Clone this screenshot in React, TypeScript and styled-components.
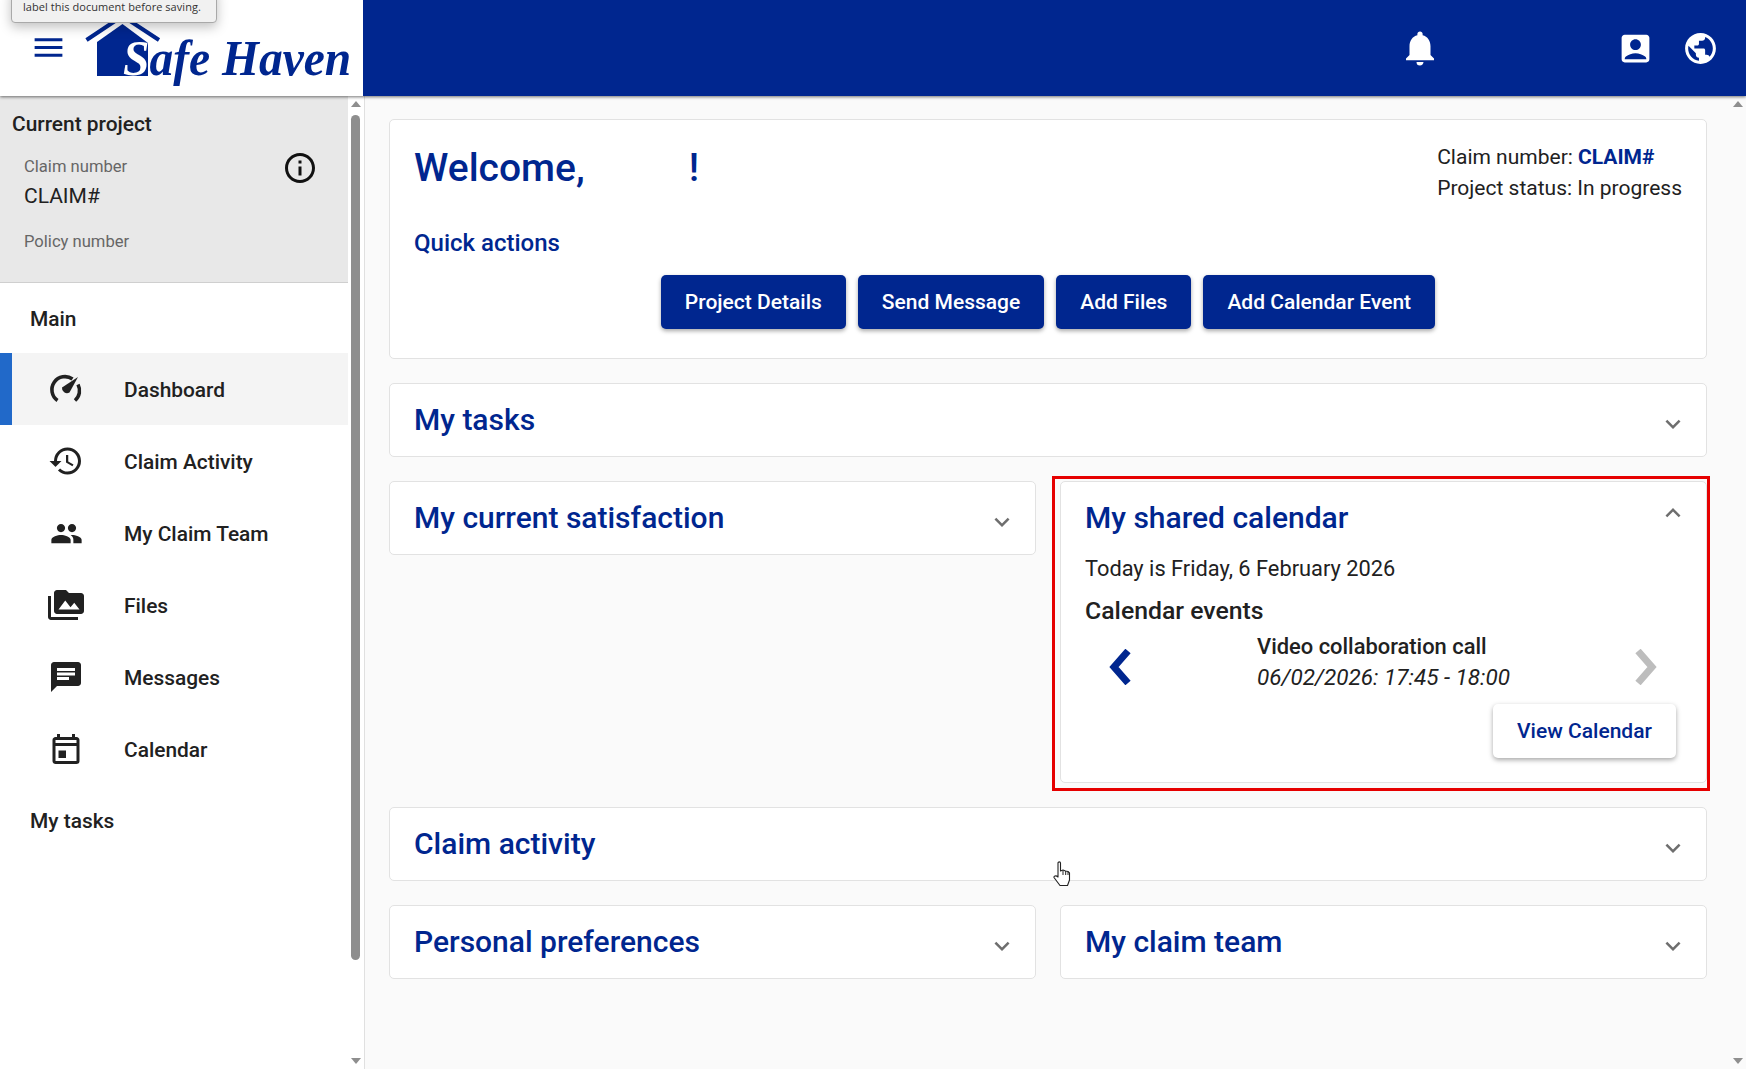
import React from 'react';
import styled, { createGlobalStyle } from 'styled-components';
import { MdMenu, MdNotifications, MdAccountBox, MdPublic, MdInfoOutline, MdHistory, MdPeople, MdPermMedia, MdChat, MdOutlineEvent, MdExpandMore, MdExpandLess } from 'react-icons/md';

const NAVY = '#00268f';

const Global = createGlobalStyle`
  html, body { margin: 0; padding: 0; height: 100%; overflow: hidden; }
  body { font-family: Roboto, "Liberation Sans", sans-serif; color: #212121; background: #fafafa; }
  * { box-sizing: border-box; }
`;

const Page = styled.div`
  position: relative; width: 1746px; height: 1069px; display: flex; flex-direction: column; overflow: hidden;
`;
const Header = styled.header`
  height: 96px; flex: none; display: flex; background: ${NAVY}; box-shadow: 0 1px 3px rgba(0,0,0,.55); position: relative; z-index: 2;
`;
const Brand = styled.div`
  width: 363px; background: #fff; display: flex; align-items: flex-start; padding-left: 33px; overflow: hidden;
`;
const MenuButton = styled.div`
  color: ${NAVY}; display: flex; margin-top: 31px; width: 30px; height: 32px;
  svg { margin: -2px -3px; flex: none; }
`;
const Logo = styled.div`
  margin-left: 22px; margin-top: 15px; display: flex; align-items: flex-start;
`;
const LogoText = styled.span`
  font-family: "Liberation Serif", serif; font-style: italic; font-weight: 700; font-size: 50px; color: ${NAVY};
  margin: 14px 0 0 -38px; line-height: 58px; white-space: nowrap; transform: scaleX(.95); transform-origin: left;
`;
const LogoS = styled.span`
  color: #fff;
`;
const HeaderTools = styled.div`
  flex: 1; display: flex; justify-content: flex-end; align-items: flex-start; color: #fff; padding: 30px 28px 0 0;
`;
const ToolIcon = styled.div<{ $ml: number }>`
  margin-left: ${p => p.$ml}px; display: flex; width: 36px; height: 36px; align-items: center; justify-content: center;
  svg { flex: none; }
`;
const Tooltip = styled.div`
  position: absolute; left: 11px; top: -12px; width: 206px; height: 35px; background: #f1f1f1; border: 1px solid #a9a9a9; border-radius: 4px;
  box-shadow: 0 4px 12px rgba(0,0,0,.25); font-size: 11px; letter-spacing: .05px; padding: 11px 0 0 11px; z-index: 5; color: #333;
  font-family: "Open Sans", Roboto, sans-serif; line-height: 14px; white-space: nowrap;
`;
const Body = styled.div`
  flex: 1; display: flex; min-height: 0;
`;
const Sidebar = styled.aside`
  width: 365px; flex: none; display: flex; background: #fff; border-right: 1px solid #e0e0e0; padding-right: 1px;
`;
const SideContent = styled.div`
  width: 348px; flex: none; display: flex; flex-direction: column;
`;
const Project = styled.section`
  height: 187px; background: #e8e8e8; border-bottom: 1px solid #cfcfcf; padding: 16px 12px 0; position: relative; flex: none;
`;
const ProjectTitle = styled.div`
  font-size: 20.9px; font-weight: 500; line-height: 24px; color: #212121;
`;
const ProjectRow = styled.div`
  display: flex; justify-content: space-between; padding: 20px 18px 0 12px;
`;
const FieldLabel = styled.div`
  font-size: 16.6px; color: #666; line-height: 22px;
`;
const FieldValue = styled.div`
  font-size: 21px; color: #212121; line-height: 28px; margin: 4px 0 21px;
`;
const InfoIcon = styled.div`
  display: flex; margin-top: -6px; color: #111;
`;
const SectionLabel = styled.div<{ $h: number; $pt?: number }>`
  height: ${p => p.$h}px; padding-top: ${p => p.$pt ?? 0}px; display: flex; align-items: center; padding-left: 30px; font-size: 20.9px; font-weight: 500; color: #212121;
`;
const NavList = styled.nav`
  display: flex; flex-direction: column;
`;
const NavItem = styled.div<{ $active?: boolean }>`
  height: 72px; display: flex; align-items: center; padding-top: 2px; padding-left: ${p => p.$active ? 36 : 48}px; font-size: 20.9px; font-weight: 500; color: #212121;
  background: ${p => p.$active ? '#f4f4f4' : 'transparent'};
  border-left: ${p => p.$active ? '12px solid #2169c9' : 'none'};
`;
const NavIcon = styled.div`
  width: 36px; height: 36px; display: flex; align-items: center; justify-content: center; margin: -2px 40px 0 0; color: #212121;
`;
const MirroredEvent = styled(MdOutlineEvent)`
  transform: scaleX(-1);
`;
const Scrollbar = styled.div<{ $thumb?: boolean }>`
  width: ${p => p.$thumb ? 15 : 16}px; flex: none; display: flex; flex-direction: column; align-items: center; justify-content: space-between; padding: 5px 0;
  background: ${p => p.$thumb ? '#fff' : '#fafafa'};
`;
const Thumb = styled.div`
  width: 9px; height: 845px; margin-top: 8px; background: #8e8e8e; border-radius: 5px; flex: none;
`;
const ScrollTrack = styled.div`
  flex: 1; display: flex; align-items: flex-start; min-height: 0;
`;
const Arrow = styled.div<{ $down?: boolean }>`
  flex: none; width: 0; height: 0; border-left: 5px solid transparent; border-right: 5px solid transparent;
  ${p => p.$down ? 'border-top: 6px solid #8e8e8e;' : 'border-bottom: 6px solid #8e8e8e;'}
`;
const Main = styled.main`
  flex: 1; min-width: 0; padding: 23px 23px 0 24px; display: flex; flex-direction: column; gap: 24px; background: #fafafa;
`;
const Row = styled.div`
  display: grid; grid-template-columns: 647px 647px; gap: 24px; align-items: start;
`;
const Card = styled.section`
  background: #fff; border: 1px solid #e2e2e2; border-radius: 5px; width: 100%;
`;
const Collapsed = styled(Card)`
  height: 74px; display: flex; align-items: center; justify-content: space-between; padding: 0 18px 0 24px;
`;
const Title = styled.h2`
  margin: 0; font-size: 30px; font-weight: 500; color: ${NAVY}; line-height: 36px;
`;
const Chevron = styled.div`
  color: #6e6e6e; display: flex; margin-top: 8px;
`;
const Welcome = styled(Card)`
  height: 240px; position: relative; padding: 24px 24px 0; display: flex; flex-direction: column;
`;
const WelcomeTop = styled.div`
  display: flex; justify-content: space-between;
`;
const Greeting = styled.h1`
  margin: 0; font-size: 39px; font-weight: 500; line-height: 48px; color: ${NAVY};
  span { display: inline-block; width: 104px; }
`;
const Status = styled.div`
  font-size: 21px; line-height: 31px; color: #212121; white-space: nowrap; margin-top: -2px;
  b { color: ${NAVY}; font-weight: 700; }
`;
const QuickLabel = styled.div`
  font-size: 24px; font-weight: 500; color: ${NAVY}; line-height: 28px; margin-top: 25px;
`;
const Actions = styled.div`
  display: flex; gap: 12px; justify-content: center; margin-top: 18px;
`;
const Primary = styled.button`
  height: 54px; padding: 0 24px; border: none; border-radius: 5px; background: ${NAVY}; color: #fff; font: 500 21px Roboto, sans-serif;
  box-shadow: 0 2px 4px rgba(0,0,0,.35); white-space: nowrap;
`;
const CalendarWrap = styled.div`
  position: relative;
`;
const RedFrame = styled.div`
  position: absolute; left: -8px; top: -5px; width: 658px; height: 315px; border: 3px solid #e60000; pointer-events: none;
`;
const CalendarCard = styled(Card)`
  height: 302px; padding: 18px 24px 0; display: flex; flex-direction: column;
`;
const CalHead = styled.div`
  display: flex; justify-content: space-between; align-items: flex-start;
`;
const CalChevron = styled.div`
  color: #6e6e6e; display: flex; margin: -2px -6px 0 0;
`;
const Today = styled.div`
  font-size: 21.8px; line-height: 28px; margin-top: 19px; color: #212121;
`;
const EventsTitle = styled.div`
  font-size: 24.8px; font-weight: 500; line-height: 30px; margin-top: 13px; color: #212121;
`;
const Carousel = styled.div`
  display: flex; align-items: flex-start; justify-content: space-between; margin-top: 6px; padding: 0 24px 0 23px;
`;
const CarouselArrow = styled.div`
  display: flex; flex: none; margin-top: 17px;
`;
const EventText = styled.div`
  flex: 1; padding-left: 125px;
`;
const EventName = styled.div`
  font-size: 21.9px; font-weight: 500; line-height: 30px; color: #212121;
`;
const EventTime = styled.div`
  font-size: 22.5px; font-style: italic; line-height: 30px; color: #212121;
`;
const CalFoot = styled.div`
  display: flex; justify-content: flex-end; margin-top: 12px; padding-right: 6px;
`;
const Secondary = styled.button`
  height: 54px; width: 183px; border: none; border-radius: 5px; background: #fff; color: ${NAVY}; font: 500 21px Roboto, sans-serif;
  box-shadow: 0 2px 5px rgba(0,0,0,.35);
`;
const Cursor = styled.svg`
  position: absolute; left: 1053px; top: 861px; z-index: 4;
`;

const Gauge = () => (
  <svg width="36" height="36" viewBox="0 0 36 36" fill="none">
    <path d="M9.5 29.5 A13 13 0 0 1 24.5 8" stroke="#212121" strokeWidth="3.6" />
    <path d="M30 13.5 A13 13 0 0 1 27 29.5" stroke="#212121" strokeWidth="3.6" />
    <path d="M30 6 L21.5 21.5 A5 5 0 0 1 14 16.5 Z" fill="#212121" />
  </svg>
);
const House = () => (
  <svg width="76" height="64" viewBox="0 0 76 64">
    <path d="M1.5 25 L37.5 1 L74 25" fill="none" stroke={NAVY} strokeWidth="4" />
    <path d="M12 27 L37.5 9 L63 28 L63 61 L12 61 Z" fill={NAVY} />
  </svg>
);
const BigChevron = ({ left, color }: { left?: boolean; color: string }) => (
  <svg width="24" height="36" viewBox="0 0 24 36">
    <path d={left ? 'M20 2 L6 18 L20 34' : 'M4 2 L18 18 L4 34'} fill="none" stroke={color} strokeWidth="7" />
  </svg>
);

const nav = [
  { label: 'Dashboard', icon: <Gauge />, active: true },
  { label: 'Claim Activity', icon: <MdHistory size={36} /> },
  { label: 'My Claim Team', icon: <MdPeople size={33} /> },
  { label: 'Files', icon: <MdPermMedia size={36} /> },
  { label: 'Messages', icon: <MdChat size={36} /> },
  { label: 'Calendar', icon: <MirroredEvent size={36} /> },
];

const Fold = ({ title }: { title: string }) => (
  <Collapsed>
    <Title>{title}</Title>
    <Chevron><MdExpandMore size={30} /></Chevron>
  </Collapsed>
);

export default function App() {
  return (
    <Page>
      <Global />
      <Tooltip>label this document before saving.</Tooltip>
      <Header>
        <Brand>
          <MenuButton><MdMenu size={37} /></MenuButton>
          <Logo>
            <House />
            <LogoText><LogoS>S</LogoS>afe Haven</LogoText>
          </Logo>
        </Brand>
        <HeaderTools>
          <ToolIcon $ml={0}><MdNotifications size={42} /></ToolIcon>
          <ToolIcon $ml={179}><MdAccountBox size={37} /></ToolIcon>
          <ToolIcon $ml={29}><MdPublic size={37} /></ToolIcon>
        </HeaderTools>
      </Header>
      <Body>
        <Sidebar>
          <SideContent>
            <Project>
              <ProjectTitle>Current project</ProjectTitle>
              <ProjectRow>
                <div>
                  <FieldLabel>Claim number</FieldLabel>
                  <FieldValue>CLAIM#</FieldValue>
                  <FieldLabel>Policy number</FieldLabel>
                </div>
                <InfoIcon><MdInfoOutline size={36} /></InfoIcon>
              </ProjectRow>
            </Project>
            <SectionLabel $h={70} $pt={2}>Main</SectionLabel>
            <NavList>
              {nav.map(n => (
                <NavItem key={n.label} $active={n.active}>
                  <NavIcon>{n.icon}</NavIcon>
                  {n.label}
                </NavItem>
              ))}
            </NavList>
            <SectionLabel $h={71}>My tasks</SectionLabel>
          </SideContent>
          <Scrollbar $thumb>
            <Arrow />
            <ScrollTrack><Thumb /></ScrollTrack>
            <Arrow $down />
          </Scrollbar>
        </Sidebar>
        <Main>
          <Welcome>
            <WelcomeTop>
              <Greeting>Welcome,<span />!</Greeting>
              <Status>
                <div>Claim number: <b>CLAIM#</b></div>
                <div>Project status: In progress</div>
              </Status>
            </WelcomeTop>
            <QuickLabel>Quick actions</QuickLabel>
            <Actions>
              <Primary>Project Details</Primary>
              <Primary>Send Message</Primary>
              <Primary>Add Files</Primary>
              <Primary>Add Calendar Event</Primary>
            </Actions>
          </Welcome>
          <Fold title="My tasks" />
          <Row>
            <Fold title="My current satisfaction" />
            <CalendarWrap>
              <RedFrame />
              <CalendarCard>
                <CalHead>
                  <Title>My shared calendar</Title>
                  <CalChevron><MdExpandLess size={30} /></CalChevron>
                </CalHead>
                <Today>Today is Friday, 6 February 2026</Today>
                <EventsTitle>Calendar events</EventsTitle>
                <Carousel>
                  <CarouselArrow><BigChevron left color={NAVY} /></CarouselArrow>
                  <EventText>
                    <EventName>Video collaboration call</EventName>
                    <EventTime>06/02/2026: 17:45 - 18:00</EventTime>
                  </EventText>
                  <CarouselArrow><BigChevron color="#bdbdbd" /></CarouselArrow>
                </Carousel>
                <CalFoot><Secondary>View Calendar</Secondary></CalFoot>
              </CalendarCard>
            </CalendarWrap>
          </Row>
          <Fold title="Claim activity" />
          <Row>
            <Fold title="Personal preferences" />
            <Fold title="My claim team" />
          </Row>
        </Main>
        <Scrollbar>
          <Arrow />
          <Arrow $down />
        </Scrollbar>
      </Body>
      <Cursor width="18" height="26" viewBox="0 0 18 26">
        <path d="M5 2 C5 0.5 7.5 0.5 7.5 2 L7.5 10 L10 9 L12.5 10 L15 10.5 L16.5 12 L16.5 19 L14.5 24.5 L7 24.5 L1 16.5 C0.5 15 3 14 5 16 Z" fill="#fff" stroke="#222" strokeWidth="1.1" strokeLinejoin="round" />
        <path d="M10 9.5 V14 M12.7 10 V14 M15 11 V14" fill="none" stroke="#222" strokeWidth="1" />
      </Cursor>
    </Page>
  );
}
